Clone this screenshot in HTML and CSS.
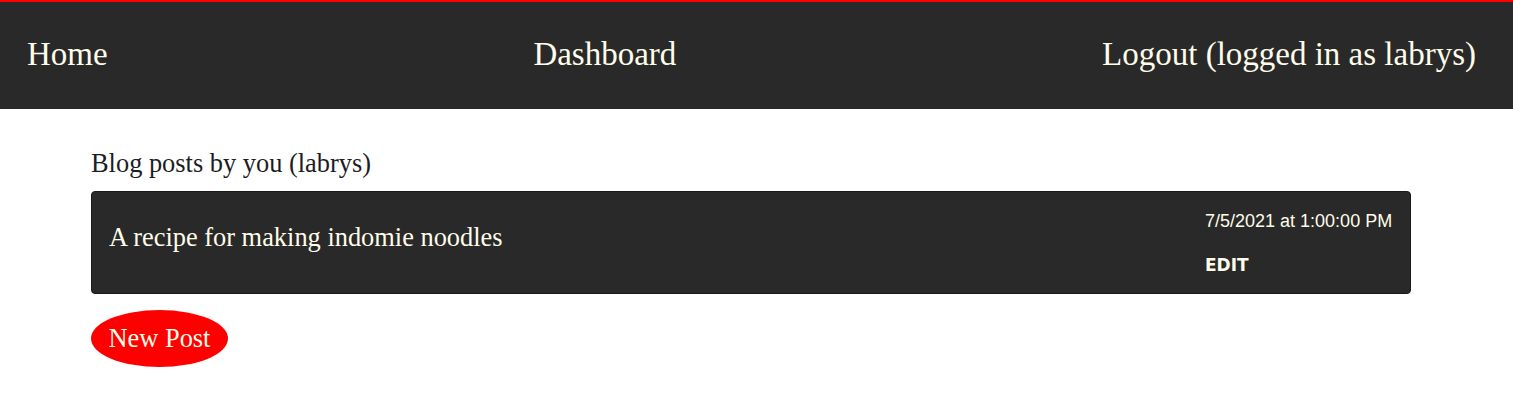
FILE: index.html
```html
<!DOCTYPE html>
<html>
<head>
<meta charset="utf-8">
<link rel="stylesheet" href="styles.css">
</head>
<body>
<header class="nav">
  <a class="nav-link" href="#">Home</a>
  <a class="nav-link" href="#">Dashboard</a>
  <a class="nav-link" href="#">Logout (logged in as labrys)</a>
</header>
<main class="content">
  <h2 class="heading">Blog posts by you (labrys)</h2>
  <div class="card">
    <div class="card-title">A recipe for making indomie noodles</div>
    <div class="card-meta">
      <div class="card-date">7/5/2021 at 1:00:00 PM</div>
      <a class="card-edit" href="#">EDIT</a>
    </div>
  </div>
  <button class="new-post">New Post</button>
</main>
</body>
</html>
```
FILE: styles.css
```css
html, body {
  margin: 0;
  padding: 0;
  background: #fff;
  font-family: "Liberation Serif", "Times New Roman", serif;
}
.nav {
  display: flex;
  justify-content: space-between;
  align-items: center;
  box-sizing: border-box;
  height: 109px;
  border-top: 2px solid #ff0000;
  background: #292929;
  padding: 0 37px 2px 27px;
}
.nav-link {
  color: #fffdea;
  text-decoration: none;
  font-size: 33px;
}
.content {
  width: 1320px;
  margin-left: 91px;
  padding-top: 39px;
}
.heading {
  margin: 0 0 13px 0;
  font-size: 26.4px;
  font-weight: normal;
  color: #1c1c24;
  line-height: 30px;
}
.card {
  display: flex;
  justify-content: space-between;
  align-items: flex-start;
  box-sizing: border-box;
  height: 103px;
  background: #292929;
  border: 1px solid #1a1a1a;
  border-radius: 4px;
  padding: 0 17px;
}
.card-title {
  color: #fffdea;
  font-size: 26.4px;
  line-height: 30px;
  padding-top: 30px;
}
.card-meta {
  display: flex;
  flex-direction: column;
  align-items: flex-start;
  gap: 23px;
  width: 188px;
  padding-top: 19px;
}
.card-date {
  color: #fffdea;
  font-family: "Liberation Sans", Arial, sans-serif;
  font-size: 18px;
  line-height: 21px;
  white-space: nowrap;
}
.card-edit {
  color: #fffdea;
  text-decoration: none;
  font-family: "DejaVu Sans", Verdana, sans-serif;
  font-weight: bold;
  font-size: 17px;
  line-height: 20px;
}
.new-post {
  display: block;
  margin-top: 16px;
  width: 137px;
  height: 57px;
  border: none;
  border-radius: 50%;
  background: #ff0000;
  color: #fffdea;
  font-family: "Liberation Serif", "Times New Roman", serif;
  font-size: 26.4px;
  padding: 0;
}
```
